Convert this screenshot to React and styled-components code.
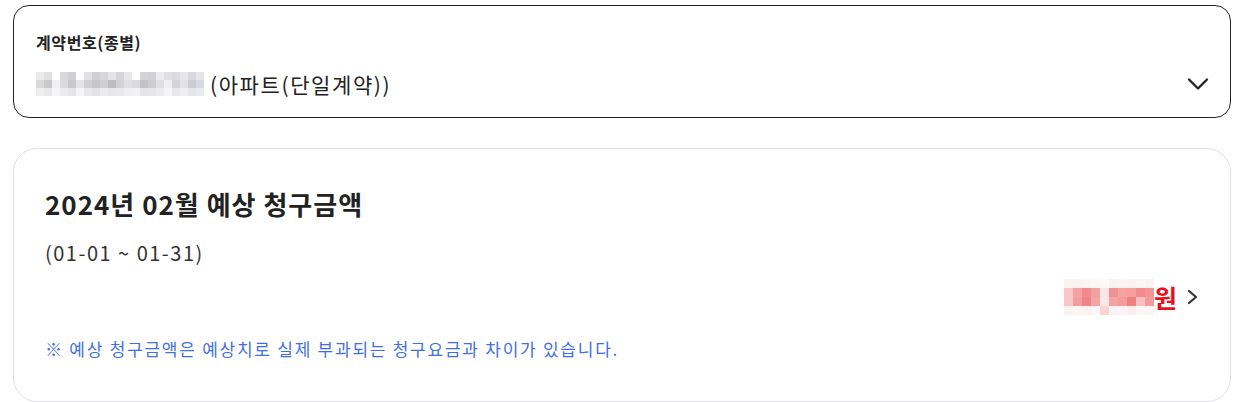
import React from 'react'
import styled, { createGlobalStyle } from 'styled-components'

const GlobalStyle = createGlobalStyle`
    body {
        margin: 0;
        background: #ffffff;
        font-family: "Noto Sans CJK KR", "Noto Sans", sans-serif;
        color: #222222;
    }
`

// pixelated placeholders for masked values
const grayRows = [
    'ebebeb e0e0e0 ffffff d8d8dc d0d0d4 ffffff e2e2e6 cfcfd4 d8d8dc e4e4e8 d6d6da e8e8ec ffffff d4d4d8 d0d0d6 ececf0 e0e0e4 dcdce0 e6e6ea d8d8e0 e4e4ea',
    'd8d8d8 c8c8c8 eef0f4 dadade c8c8cc e4e4e8 cfcfd4 c6c6cc d0d0d4 bcbcc2 d2d2d6 e0e0e4 dadade c2c2c8 ccccd2 e2dde0 f0f0f2 d4d4d8 e2e2e6 ccccd4 d8d8e2',
    'eeeeee e8e8e8 f4f4f6 ececee e6e6ea f4f4f6 e8e8ec e2e2e6 ececf0 e8e8ec eaeaee f0f0f2 f2f2f4 e4e4e8 e6e6ea ececee f4f4f6 e8e8ec eeeef0 e6e6ea eaeaf0'
]

const redRows = [
    'fdf2f2 fdf2f2 fcf4f4 fdf6f6 fef8f8 fdf2f2 fcf4f4 fdf2f2 fef6f6 fdf2f2',
    'f8c6c6 f3a3a4 f08a8c f3a0a2 fbe6e6 f09294 f4a2a4 f4a0a0 f08c90 f29598',
    'f8c8c8 f29ea0 f08486 f4a4a6 fde8e8 f4a2a4 f29c9e f08082 f8c0c0 f29a9c',
    'fdf2f2 fdf4f4 fcf2f2 fdf6f6 f8d4d4 fdf2f2 fcf4f4 fdeeee fdf6f6 fdf4f4'
]

const Mosaic = ({ rows, size }) => (
    <MosaicGrid>
        {rows.map((row, r) => (
            <MosaicRow key={r}>
                {row.split(' ').map((c, i) => (
                    <Cell key={i} size={size} style={{ background: `#${c}` }} />
                ))}
            </MosaicRow>
        ))}
    </MosaicGrid>
)

const ChevronDown = () => (
    <svg width="24" height="24" viewBox="0 0 24 24" fill="none" stroke="#222" strokeWidth="2.3" strokeLinecap="round" strokeLinejoin="round">
        <path d="M3 7.5l9 9 9-9" />
    </svg>
)

const ChevronRight = () => (
    <svg width="16" height="20" viewBox="0 0 16 20" fill="none" stroke="#333" strokeWidth="2.2" strokeLinecap="round" strokeLinejoin="round">
        <path d="M4 4l7 6-7 6" />
    </svg>
)

const App = () => {
    return (
        <Page>
            <GlobalStyle />
            <Select>
                <Label>계약번호(종별)</Label>
                <ValueRow>
                    <Value>
                        <Mosaic rows={grayRows} size={8} />
                        <span>(아파트(단일계약))</span>
                    </Value>
                    <ChevronDown />
                </ValueRow>
            </Select>

            <Card>
                <Title>2024년 02월 예상 청구금액</Title>
                <Period>(01-01 ~ 01-31)</Period>
                <AmountRow>
                    <Amount>
                        <Mosaic rows={redRows} size={9} />
                        <Won>원</Won>
                    </Amount>
                    <ChevronRight />
                </AmountRow>
                <Notice>※ 예상 청구금액은 예상치로 실제 부과되는 청구요금과 차이가 있습니다.</Notice>
            </Card>
        </Page>
    )
}

const Page = styled.div`
    display: flex;
    flex-direction: column;
    gap: 30px;
    padding: 5px 12px 0 13px;
    height: 402px;
    box-sizing: border-box;
    overflow: hidden;
`

const Select = styled.div`
    display: flex;
    flex-direction: column;
    gap: 18px;
    height: 114px;
    box-sizing: border-box;
    border: 1px solid #222222;
    border-radius: 16px;
    padding: 26px 20px 0 22px;
`

const Label = styled.div`
    font-size: 16px;
    font-weight: 700;
    letter-spacing: 0.6px;
    color: #222222;
    line-height: 20px;
`

const ValueRow = styled.div`
    display: flex;
    align-items: center;
    justify-content: space-between;
`

const Value = styled.div`
    display: flex;
    align-items: center;
    gap: 6px;
    font-size: 21px;
    letter-spacing: 1.6px;
    line-height: 28px;
    color: #222222;
`

const MosaicGrid = styled.div`
    display: flex;
    flex-direction: column;
`

const MosaicRow = styled.div`
    display: flex;
`

const Cell = styled.div`
    width: ${p => p.size}px;
    height: ${p => p.size}px;
`

const Card = styled.div`
    display: flex;
    flex-direction: column;
    border: 1px solid #e0e0e6;
    border-radius: 24px;
    padding: 37px 31px 40px 31px;
    flex: 1;
`

const Title = styled.div`
    font-size: 26px;
    font-weight: 700;
    letter-spacing: 1px;
    line-height: 36px;
    color: #222222;
`

const Period = styled.div`
    margin-top: 17px;
    font-size: 20px;
    letter-spacing: 1.5px;
    line-height: 28px;
    color: #333333;
`

const AmountRow = styled.div`
    display: flex;
    align-items: center;
    justify-content: flex-end;
    gap: 8px;
    margin-top: 12px;
    margin-right: -2px;
`

const Amount = styled.div`
    display: flex;
    align-items: center;
`

const Won = styled.span`
    font-size: 25px;
    font-weight: 700;
    color: #e8101a;
    line-height: 32px;
`

const Notice = styled.div`
    margin-top: 22px;
    font-size: 17px;
    letter-spacing: 1.75px;
    line-height: 24px;
    color: #3f6fe6;
`

export default App
